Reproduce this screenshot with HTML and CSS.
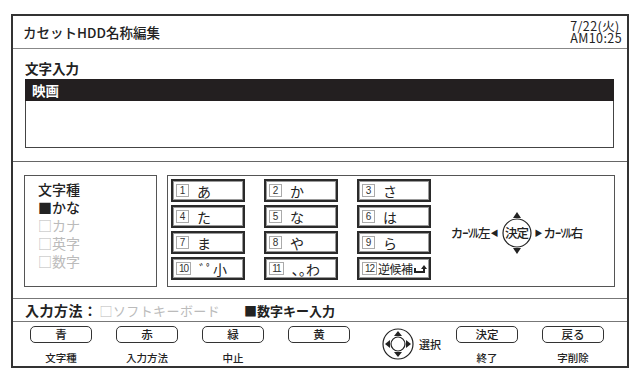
FILE: index.html
```html
<!DOCTYPE html>
<html lang="ja">
<head>
<meta charset="utf-8">
<link rel="stylesheet" href="styles.css">
</head>
<body>
<div class="frame">
  <div class="header">
    <div class="title">カセットHDD名称編集</div>
    <div class="clock"><div>7/22(火)</div><div>AM10:25</div></div>
  </div>
  <div class="input-section">
    <div class="label">文字入力</div>
    <div class="bar">映画</div>
    <div class="box"></div>
  </div>
  <div class="middle">
    <div class="types">
      <div class="t-head">文字種</div>
      <div class="t-on">■かな</div>
      <div class="t-off">□カナ</div>
      <div class="t-off">□英字</div>
      <div class="t-off">□数字</div>
    </div>
    <div class="keypanel">
      <div class="keys">
        <div class="key"><span class="num">1</span><span class="kana">あ</span></div>
        <div class="key"><span class="num">2</span><span class="kana">か</span></div>
        <div class="key"><span class="num">3</span><span class="kana">さ</span></div>
        <div class="key"><span class="num">4</span><span class="kana">た</span></div>
        <div class="key"><span class="num">5</span><span class="kana">な</span></div>
        <div class="key"><span class="num">6</span><span class="kana">は</span></div>
        <div class="key"><span class="num">7</span><span class="kana">ま</span></div>
        <div class="key"><span class="num">8</span><span class="kana">や</span></div>
        <div class="key"><span class="num">9</span><span class="kana">ら</span></div>
        <div class="key"><span class="num wide">10</span><span class="kana">ﾞﾟ小</span></div>
        <div class="key"><span class="num wide">11</span><span class="kana">､｡わ</span></div>
        <div class="key k12"><span class="num wide">12</span><span class="kana small">逆候補</span>
          <svg class="ret" width="14" height="10" viewBox="0 0 14 10"><path d="M1 3 V7 H10 V3" fill="none" stroke="#222" stroke-width="2"/><path d="M7 4 L10 0 L13 4 Z" fill="#222"/></svg>
        </div>
      </div>
      <div class="cursor">
        <span class="cl">カｰｿﾙ左</span>
        <span class="tri">◀</span>
        <span class="dial">
          <svg width="34" height="46" viewBox="0 0 34 46"><path d="M17 2 L21 8 H13 Z" fill="#222"/><circle cx="17" cy="23" r="14" fill="none" stroke="#222" stroke-width="1.2"/><path d="M17 44 L21 38 H13 Z" fill="#222"/></svg>
          <span class="dial-t">決定</span>
        </span>
        <span class="tri">▶</span>
        <span class="cl">カｰｿﾙ右</span>
      </div>
    </div>
  </div>
  <div class="method">
    <span class="m-label">入力方法：</span>
    <span class="m-off">□ソフトキーボード</span>
    <span class="m-on">■数字キー入力</span>
  </div>
  <div class="buttons">
    <div class="btn-col"><div class="btn">青</div><div class="cap">文字種</div></div>
    <div class="btn-col"><div class="btn">赤</div><div class="cap">入力方法</div></div>
    <div class="btn-col"><div class="btn">緑</div><div class="cap">中止</div></div>
    <div class="btn-col"><div class="btn">黄</div><div class="cap">&nbsp;</div></div>
    <div class="dpad">
      <svg width="32" height="32" viewBox="0 0 32 32"><circle cx="16" cy="16" r="15" fill="none" stroke="#222" stroke-width="1.2"/><circle cx="16" cy="16" r="7" fill="none" stroke="#222" stroke-width="1.2"/><path d="M16 3 L20 8 H12 Z M16 29 L20 24 H12 Z M3 16 L8 12 V20 Z M29 16 L24 12 V20 Z" fill="#222"/></svg>
      <span class="sel">選択</span>
    </div>
    <div class="btn-col"><div class="btn">決定</div><div class="cap">終了</div></div>
    <div class="btn-col"><div class="btn">戻る</div><div class="cap">字削除</div></div>
  </div>
</div>
</body>
</html>
```
FILE: styles.css
```css
* { box-sizing: border-box; }
body {
  margin: 0;
  background: #fff;
  font-family: "Noto Sans CJK JP", "Noto Sans", sans-serif;
  color: #222;
}
.frame {
  margin: 14px 0 0 11px;
  width: 618px;
  height: 354px;
  border: 2px solid #333;
  display: flex;
  flex-direction: column;
}
.header {
  height: 33px;
  border-bottom: 1px solid #888;
  display: flex;
  justify-content: space-between;
  align-items: center;
  padding: 0 5px 0 10px;
}
.title { font-size: 13.5px; font-weight: 500; }
.clock { font-size: 12.5px; line-height: 12px; text-align: left; padding-bottom: 1px; letter-spacing: 0.4px; }
.input-section {
  padding: 8px 13px 13px 12px;
  border-bottom: 1px solid #666;
}
.label { font-size: 13.5px; font-weight: 700; line-height: 22px; }
.bar {
  background: #231f20;
  color: #fff;
  height: 22px;
  line-height: 22px;
  font-size: 13.5px;
  font-weight: 700;
  padding-left: 7px;
}
.box {
  height: 47px;
  border: 1px solid #444;
  border-top: none;
}
.middle {
  display: flex;
  gap: 10px;
  padding: 13px 12px 11px 11px;
  border-bottom: 1px solid #777;
}
.types {
  width: 133px;
  height: 112px;
  border: 1px solid #555;
  padding: 4px 0 0 13px;
  font-size: 14px;
  line-height: 18px;
}
.t-head, .t-on { font-weight: 500; color: #222; }
.t-off { color: #bbb; }
.keypanel {
  flex: 1;
  height: 112px;
  border: 1px solid #555;
  display: flex;
  padding: 3px 0 0 3px;
}
.keys {
  display: grid;
  grid-template-columns: repeat(3, 74px);
  grid-auto-rows: 23px;
  column-gap: 19px;
  row-gap: 3px;
}
.key {
  border: 2px solid #2a2a2a;
  box-shadow: inset 0 0 0 1px #999;
  display: flex;
  align-items: center;
  padding-left: 3px;
}
.num {
  width: 13px;
  height: 13px;
  border: 1px solid #aaa;
  font-size: 10px;
  line-height: 11px;
  text-align: center;
  color: #333;
  font-family: "Liberation Sans", sans-serif;
}
.num.wide { width: 15px; letter-spacing: -1px; }
.kana { font-size: 14px; margin-left: 8px; line-height: 16px; white-space: nowrap; }
.kana.small { font-size: 12px; margin-left: 1px; letter-spacing: -0.5px; }
.ret { margin-left: 1px; margin-top: 3px; }
.cursor {
  flex: 1;
  display: flex;
  align-items: center;
  justify-content: center;
  gap: 1px;
  padding-right: 12px;
}
.cl { font-size: 12.5px; font-weight: 500; letter-spacing: -1px; white-space: nowrap; }
.tri { font-size: 8px; }
.dial { position: relative; width: 34px; height: 46px; display: inline-block; }
.dial svg { display: block; }
.dial-t {
  position: absolute;
  left: 0; right: 0; top: 14px;
  text-align: center;
  font-size: 12.5px;
  font-weight: 500;
  line-height: 18px;
  letter-spacing: -1px;
}
.method {
  height: 23px;
  border-bottom: 1px solid #777;
  display: flex;
  align-items: center;
  padding-left: 12px;
  font-size: 13px;
  white-space: nowrap;
}
.m-label { font-weight: 700; font-size: 14px; letter-spacing: 0.5px; }
.m-off { color: #bbb; margin-left: 2px; letter-spacing: 0.4px; }
.m-on { font-weight: 700; margin-left: 24px; }
.buttons {
  display: flex;
  padding: 4px 0 0 17px;
  align-items: flex-start;
}
.btn-col { width: 62px; margin-right: 24px; display: flex; flex-direction: column; align-items: center; }
.btn {
  width: 62px;
  height: 17px;
  border: 1px solid #333;
  border-radius: 5px;
  text-align: center;
  font-size: 11.5px;
  line-height: 15px;
  font-weight: 500;
}
.cap { font-size: 10.5px; font-weight: 500; line-height: 14px; margin-top: 8px; white-space: nowrap; }
.dpad { display: flex; align-items: center; gap: 5px; margin: 2px 15px 0 8px; }
.dpad svg { display: block; }
.sel { font-size: 11px; font-weight: 500; white-space: nowrap; }
```
